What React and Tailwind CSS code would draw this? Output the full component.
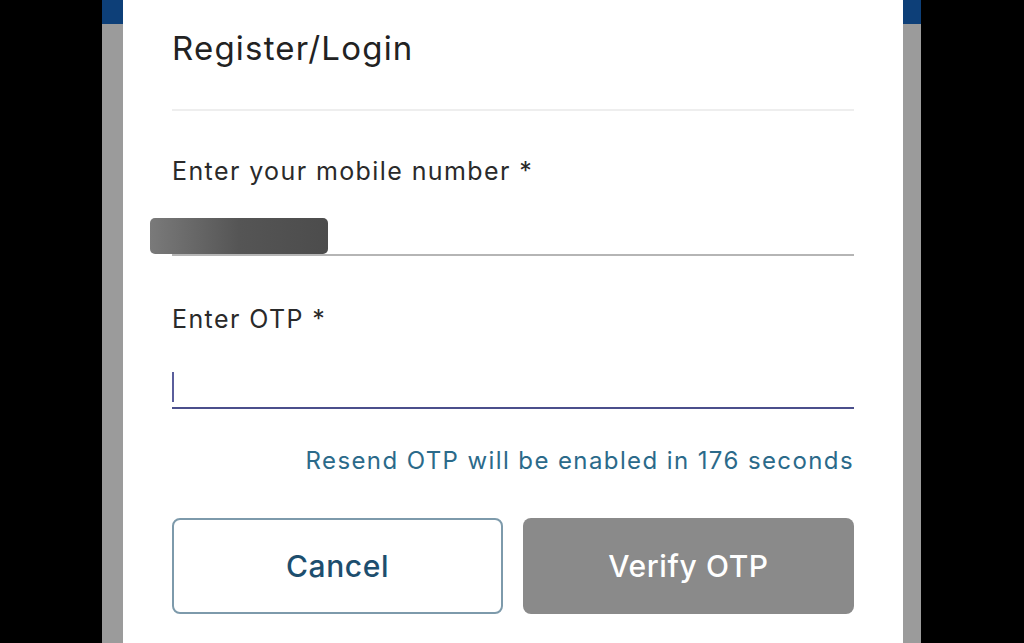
export default function App() {
   return (
      <div
         className="flex h-[643px] w-[1024px] overflow-hidden bg-black"
         style={{ fontFamily: "Inter, 'Noto Sans', sans-serif" }}
      >
         <div className="w-[102px] bg-black" />
         <div className="flex w-[21px] flex-col bg-[#9b9b9b]">
            <div className="h-[24px] bg-[#0d3f78]" />
         </div>

         <div className="flex w-[780px] flex-col bg-white px-[49px]">
            <h1 className="mt-[28px] h-[40px] text-[33px] leading-[40px] font-normal text-[#222] tracking-[1.2px]">
               Register/Login
            </h1>
            <div className="mt-[41px] h-[2px] bg-[#eeeeee]" />

            <label className="mt-[46px] h-[28px] text-[25px] leading-[28px] text-[#2a2a2a] tracking-[1.4px]">
               Enter your mobile number *
            </label>
            <div className="relative mt-[31px] h-[40px] border-b-2 border-[#b5b5b5]">
               <div className="absolute left-[-22px] top-[2px] h-[36px] w-[178px] rounded-[5px] bg-gradient-to-r from-[#7a7a7a] via-[#555] to-[#4c4c4c]" />
            </div>

            <label className="mt-[49px] h-[28px] text-[25px] leading-[28px] text-[#2a2a2a] tracking-[1.4px]">
               Enter OTP *
            </label>
            <div className="mt-[30px] flex h-[46px] items-start border-b-2 border-[#4b4f8c]">
               <div className="mt-[9px] h-[30px] w-[2px] bg-[#5a5e9c]" />
            </div>

            <p className="mt-[37px] text-right text-[24px] leading-[30px] text-[#2b6a8a] tracking-[1.4px]">
               Resend OTP will be enabled in 176 seconds
            </p>

            <div className="mt-[42px] flex gap-[20px]">
               <button className="flex h-[96px] w-[332px] items-center justify-center rounded-[8px] border-2 border-[#7d9aab] bg-white text-[30px] font-medium text-[#1d4e6e] tracking-[0.6px]">
                  Cancel
               </button>
               <button className="flex h-[96px] w-[332px] items-center justify-center rounded-[8px] bg-[#8a8a8a] text-[30px] font-medium text-white tracking-[0.6px]">
                  Verify OTP
               </button>
            </div>
         </div>

         <div className="flex w-[18px] flex-col bg-[#9b9b9b]">
            <div className="h-[24px] bg-[#0d3f78]" />
         </div>
         <div className="flex-1 bg-black" />
      </div>
   );
}
